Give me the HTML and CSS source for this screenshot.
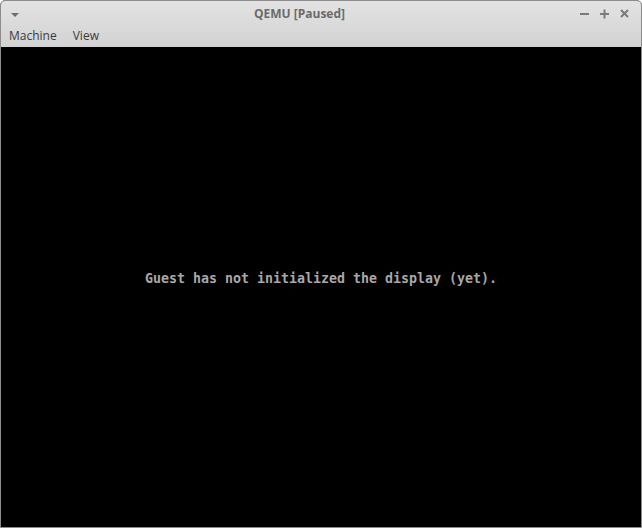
FILE: index.html
```html
<!DOCTYPE html>
<html>
<head>
<meta charset="utf-8">
<link rel="stylesheet" href="styles.css">
</head>
<body>
<div class="window">
  <div class="chrome">
    <div class="titlebar">
      <div class="tb-left">
        <svg width="10" height="6" viewBox="0 0 10 6"><path d="M1 1 L9 1 L5 5 Z" fill="#6e6e6e"/></svg>
      </div>
      <div class="title">QEMU [Paused]</div>
      <div class="tb-right">
        <svg width="11" height="11" viewBox="0 0 11 11"><rect x="1" y="5" width="9" height="2" fill="#7a7a7a"/></svg>
        <svg width="11" height="11" viewBox="0 0 11 11"><rect x="1" y="5" width="9" height="2" fill="#7a7a7a"/><rect x="4.5" y="1.5" width="2" height="9" fill="#7a7a7a"/></svg>
        <svg width="11" height="11" viewBox="0 0 11 11"><path d="M2 2 L9 9 M9 2 L2 9" stroke="#7a7a7a" stroke-width="2"/></svg>
      </div>
    </div>
    <div class="menubar">
      <span class="menu">Machine</span>
      <span class="menu">View</span>
    </div>
  </div>
  <div class="screen">
    <div class="msg">Guest has not initialized the display (yet).</div>
  </div>
</div>
</body>
</html>
```

FILE: styles.css
```css
html, body {
  margin: 0;
  padding: 0;
  background: #ffffff;
}
.window {
  width: 642px;
  height: 528px;
  box-sizing: border-box;
  border: 1px solid #8c8c8c;
  border-radius: 5px 5px 0 0;
  display: flex;
  flex-direction: column;
  overflow: hidden;
  background: #000;
}
.chrome {
  background: linear-gradient(#e3e3e3, #d2d2d2);
  height: 46px;
  display: flex;
  flex-direction: column;
}
.titlebar {
  height: 25px;
  display: flex;
  align-items: center;
  font-family: "Open Sans", "Noto Sans", sans-serif;
}
.tb-left {
  width: 40px;
  padding-left: 9px;
  padding-top: 2px;
  display: flex;
  align-items: center;
}
.title {
  flex: 1;
  text-align: center;
  font-weight: bold;
  font-size: 12px;
  color: #6b6b6b;
  padding-right: 30px;
}
.tb-right {
  display: flex;
  gap: 9px;
  padding-right: 11px;
  align-items: center;
}
.menubar {
  height: 19px;
  display: flex;
  align-items: center;
  padding-left: 8px;
  padding-bottom: 2px;
  gap: 16px;
  font-family: "Open Sans", "Noto Sans", sans-serif;
  font-size: 12px;
  color: #3c3c3c;
}
.screen {
  flex: 1;
  background: #000;
  display: flex;
  justify-content: center;
  padding-top: 224px;
}
.msg {
  font-family: "DejaVu Sans Mono", "Liberation Mono", monospace;
  font-size: 13.3px;
  font-weight: bold;
  color: #a8a8a8;
  white-space: pre;
  height: 16px;
}
```
